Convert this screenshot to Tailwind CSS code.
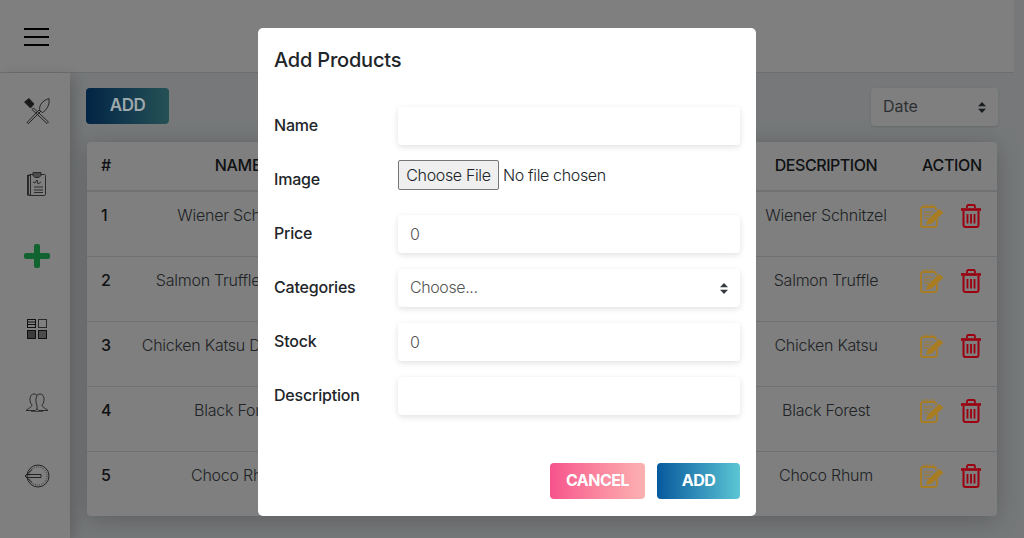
<!DOCTYPE html>
<html lang="en">
  <head>
    <meta charset="UTF-8" />
    <meta name="viewport" content="width=device-width, initial-scale=1.0" />
    <title>Products</title>
    <script src="https://cdn.jsdelivr.net/npm/@tailwindcss/browser@4"></script>
  </head>
  <body class="font-['Inter',sans-serif] text-[#212529] bg-[#ecf1f4]">
    <!-- shared row icons -->
    <svg class="absolute w-0 h-0">
      <symbol id="ic-edit" viewBox="0 0 24 24">
        <path d="M16 6V5a2 2 0 0 0-2-2H3a2 2 0 0 0-2 2v16a2 2 0 0 0 2 2h11a3 3 0 0 0 3-2v-6" fill="none" stroke="#a87c22" stroke-width="1.800" />
        <path d="M4 0v4M7 0v4M10 0v4M13 0v4M4 8h9M4 11h7M4 14h5" fill="none" stroke="#a87c22" stroke-width="1" />
        <path d="M6 21l1.500-5L19 5l4.500 3.500L12 19.500Z" fill="#a87c22" />
      </symbol>
      <symbol id="ic-trash" viewBox="0 0 20 24">
        <path d="M0 5.500h20" fill="none" stroke="#9c0010" stroke-width="2.600" />
        <path d="M6 4V2.500Q6 1 7.500 1h5Q14 1 14 2.500V4" fill="none" stroke="#9c0010" stroke-width="1.800" />
        <path d="M2.500 7v14q0 2 2 2h11q2 0 2-2V7" fill="none" stroke="#9c0010" stroke-width="2" />
        <path d="M6.500 10v9.500M10 10v9.500M13.500 10v9.500" fill="none" stroke="#9c0010" stroke-width="1.800" />
      </symbol>
    </svg>

    <div class="relative h-[538px] w-[1024px] overflow-hidden">
      <!-- Header -->
      <header class="flex items-center w-[1014px] h-[73px] bg-white border-b border-[#ddd] pl-6">
        <svg class="mt-[2px]" width="26" height="18" viewBox="0 0 26 18" fill="none" stroke="#000" stroke-width="1.800"><path d="M0 1h25M0 9h25M0 17h25" /></svg>
        <p class="flex-1 text-center text-[24px] pl-[35px] pt-[4px] text-[#555]">Products</p>
      </header>

      <div class="flex h-[465px]">
        <!-- Sidebar -->
        <aside class="w-[70px] shrink-0 bg-white shadow-[4px_4px_14px_rgba(0,0,0,0.2)] flex flex-col items-center pt-[25px] pl-[3px]">
          <svg class="w-[26px] h-[26px] shrink-0" viewBox="0 0 26 26" fill="none" stroke="#333" stroke-width="0.900">
            <path d="M3 24.500 15 12l1.500 1.500L4.500 25.500ZM24.500 24 9.500 10 8 11.500 23 25.500Z" />
            <path d="M0.500 4 5 0.500l5 5.500-3.500 4Z" fill="#333" />
            <path d="M16 13c-1.500-4 1-10 9-12.500 1 7-3 12-6.500 14Z" />
          </svg>
          <svg class="w-[20px] h-[24px] shrink-0 mt-[48px]" viewBox="0 0 20 24" fill="none" stroke="#444" stroke-width="0.900">
            <rect x="1.500" y="2.500" width="17" height="21" rx="1" />
            <rect x="0.500" y="3.500" width="3" height="19.500" />
            <path d="M6 .5h8v3l-2 2H8l-2-2Z" fill="#999" />
            <path d="M6 10l2 1 2-3 1 4 3-2M7 15h9M7 18h9M7 20.500h9" />
          </svg>
          <svg class="w-[26px] h-[24px] shrink-0 mt-[48px]" viewBox="0 0 26 24" fill="#22c75e"><rect x="0" y="9" width="26" height="6" rx="2" /><rect x="10" y="0" width="6" height="24" rx="2" /></svg>
          <svg class="w-[20px] h-[20px] shrink-0 mt-[51px]" viewBox="0 0 20 20" fill="none" stroke="#222" stroke-width="1">
            <rect x="0.500" y="0.500" width="8" height="8" />
            <path d="M1 3h7M1 5.500h7" />
            <rect x="11.500" y="0.500" width="8" height="8" stroke="#555" />
            <rect x="0.500" y="11.500" width="8" height="8" fill="#777" />
            <rect x="11.500" y="11.500" width="8" height="8" fill="#999" />
          </svg>
          <svg class="w-[24px] h-[19px] shrink-0 mt-[54px]" viewBox="0 0 24 19" fill="none" stroke="#444" stroke-width="0.900">
            <path d="M7 12C4 9 4 1 9 1c1.500 0 2.500 .5 3 1.500 .5-1 1.500-1.500 3-1.500 5 0 5 8 2 11 0 2 3 3 6 5.500H14c-1 0-2-1-2-2 0 1-1 2-2 2H1c3-2.500 6-3.500 6-5.500Z" />
            <path d="M12 2.500c-1.500 3-1.500 7 0 10v3" />
            <path d="M6 18.500h12" stroke="#777" />
          </svg>
          <svg class="w-[26px] h-[24px] shrink-0 mt-[52px]" viewBox="0 0 26 24" fill="none" stroke="#333" stroke-width="0.900">
            <circle cx="14" cy="12" r="11" />
            <circle cx="14" cy="12" r="9" stroke-dasharray="1 1" stroke="#666" />
            <path d="M8 5.500 1 12l7 6.500M2 10.500h15v3H2" />
          </svg>
        </aside>

        <!-- Main -->
        <main class="flex-1 pl-4 pr-[26px] pt-[15px] min-w-0">
          <div class="flex justify-between items-start h-[54px]">
            <button class="w-[83px] h-9 rounded-[4px] bg-gradient-to-r from-[#06498a] to-[#4aa3ab] text-[17px] font-semibold tracking-[-0.5px]"><span class="relative z-20 text-[#9ea7ac]">ADD</span></button>
            <div class="relative w-[127px] h-[38px]">
              <select class="appearance-none w-full h-full pb-[2px] bg-white rounded-[4px] px-[12px] text-[16px] text-[#5b6166] shadow-sm">
                <option>Date</option>
              </select>
              <svg class="absolute right-[12px] top-[14px]" width="8" height="11" viewBox="0 0 8 11" fill="#343a40"><path d="M4 0 8 4.300H0ZM4 11 0 6.700h8Z" /></svg>
            </div>
          </div>

          <div class="w-[910px] h-[374px] ml-[1px] bg-white rounded-[4px] shadow-[0_4px_24px_rgba(0,0,0,0.22)]">
            <table class="w-full table-fixed text-[16px]">
              <colgroup>
                <col class="w-[40px]" />
                <col class="w-[222px]" />
                <col class="w-[101px]" /><col class="w-[101px]" /><col class="w-[102px]" /><col class="w-[102px]" />
                <col class="w-[142px]" />
                <col class="w-[100px]" />
              </colgroup>
              <thead>
                <tr class="h-[49px] border-b-2 border-[#dee2e6]">
                  <th class="pl-[14px] pb-[2px] text-left font-medium">#</th>
                  <th class="pb-[2px] font-medium tracking-[-0.3px]">NAME</th>
                  <th class="pb-[2px] font-medium">IMAGE</th>
                  <th class="pb-[2px] font-medium">PRICE</th>
                  <th class="pb-[2px] font-medium">CATEGORY</th>
                  <th class="pb-[2px] font-medium">STOCK</th>
                  <th class="pb-[2px] font-medium tracking-[-0.45px]">DESCRIPTION</th>
                  <th class="pl-[25px] pb-[2px] text-left font-medium tracking-[-0.3px]">ACTION</th>
                </tr>
              </thead>
              <tbody class="text-center align-top text-[#42474c] font-[350] tracking-[-0.25px]">
                <tr class="h-[65px] border-b border-[#dee2e6]">
                  <td class="pl-[14px] pt-[11px] text-left font-medium text-[#212529]">1</td>
                  <td class="pt-[11px]">Wiener Schnitzel</td>
                  <td colspan="4"></td>
                  <td class="pt-[11px]">Wiener Schnitzel</td>
                  <td class="pl-[23px] pt-[12px]">
                    <div class="flex gap-[17px]">
                      <svg width="24" height="24" class="relative z-20"><use href="#ic-edit" /></svg>
                      <svg width="20" height="24" class="relative z-20"><use href="#ic-trash" /></svg>
                    </div>
                  </td>
                </tr>
                <tr class="h-[65px] border-b border-[#dee2e6]">
                  <td class="pl-[14px] pt-[11px] text-left font-medium text-[#212529]">2</td>
                  <td class="pt-[11px]">Salmon Truffle Teriyaki</td>
                  <td colspan="4"></td>
                  <td class="pt-[11px]">Salmon Truffle</td>
                  <td class="pl-[23px] pt-[12px]">
                    <div class="flex gap-[17px]">
                      <svg width="24" height="24" class="relative z-20"><use href="#ic-edit" /></svg>
                      <svg width="20" height="24" class="relative z-20"><use href="#ic-trash" /></svg>
                    </div>
                  </td>
                </tr>
                <tr class="h-[65px] border-b border-[#dee2e6]">
                  <td class="pl-[14px] pt-[11px] text-left font-medium text-[#212529]">3</td>
                  <td class="pt-[11px] whitespace-nowrap">Chicken Katsu Donburi Set</td>
                  <td colspan="4"></td>
                  <td class="pt-[11px]">Chicken Katsu</td>
                  <td class="pl-[23px] pt-[12px]">
                    <div class="flex gap-[17px]">
                      <svg width="24" height="24" class="relative z-20"><use href="#ic-edit" /></svg>
                      <svg width="20" height="24" class="relative z-20"><use href="#ic-trash" /></svg>
                    </div>
                  </td>
                </tr>
                <tr class="h-[65px] border-b border-[#dee2e6]">
                  <td class="pl-[14px] pt-[11px] text-left font-medium text-[#212529]">4</td>
                  <td class="pt-[11px]">Black Forest</td>
                  <td colspan="4"></td>
                  <td class="pt-[11px]">Black Forest</td>
                  <td class="pl-[23px] pt-[12px]">
                    <div class="flex gap-[17px]">
                      <svg width="24" height="24" class="relative z-20"><use href="#ic-edit" /></svg>
                      <svg width="20" height="24" class="relative z-20"><use href="#ic-trash" /></svg>
                    </div>
                  </td>
                </tr>
                <tr class="h-[65px]">
                  <td class="pl-[14px] pt-[11px] text-left font-medium text-[#212529]">5</td>
                  <td class="pt-[11px]">Choco Rhum</td>
                  <td colspan="4"></td>
                  <td class="pt-[11px]">Choco Rhum</td>
                  <td class="pl-[23px] pt-[12px]">
                    <div class="flex gap-[17px]">
                      <svg width="24" height="24" class="relative z-20"><use href="#ic-edit" /></svg>
                      <svg width="20" height="24" class="relative z-20"><use href="#ic-trash" /></svg>
                    </div>
                  </td>
                </tr>
              </tbody>
            </table>
          </div>
        </main>
      </div>

      <!-- Modal -->
      <div class="absolute inset-0 z-10 bg-black/50"></div>
      <div class="absolute z-30 left-[258px] top-[28px] w-[498px] h-[488px] bg-white rounded-[5px] px-4 flex flex-col">
        <h2 class="text-[20px] font-medium leading-[24px] mt-5 tracking-[-0.2px]">Add Products</h2>
        <form class="flex flex-col mt-[35px]">
          <div class="flex items-center h-[38px] mb-4">
            <label class="w-[124px] pb-[2px] font-medium tracking-[-0.2px]">Name</label>
            <input class="w-[342px] h-[38px] rounded-[4px] px-3 shadow-[0_2px_6px_rgba(0,0,0,0.12)]" type="text" />
          </div>
          <div class="flex items-center h-[38px] mb-4">
            <label class="w-[124px] pb-[2px] font-medium tracking-[-0.2px]">Image</label>
            <input class="w-[342px] mt-[-10px] file:mr-[4px] file:h-[30px] file:w-[101px] file:bg-[#efefef] file:border file:border-[#767676] file:rounded-[2px] tracking-[-0.35px] font-[350]" type="file" />
          </div>
          <div class="flex items-center h-[38px] mb-4">
            <label class="w-[124px] pb-[2px] font-medium tracking-[-0.2px]">Price</label>
            <input class="w-[342px] h-[38px] rounded-[4px] px-3 text-[#555] font-[350] shadow-[0_2px_6px_rgba(0,0,0,0.12)]" type="number" value="0" />
          </div>
          <div class="flex items-center h-[38px] mb-4">
            <label class="w-[124px] pb-[2px] font-medium tracking-[-0.2px]">Categories</label>
            <div class="relative w-[342px] h-[38px]">
              <select class="appearance-none w-full h-full pb-[2px] rounded-[4px] px-3 text-[#555] font-[350] tracking-[-0.4px] shadow-[0_2px_6px_rgba(0,0,0,0.12)]">
                <option>Choose...</option>
              </select>
              <svg class="absolute right-[12px] top-[14px]" width="8" height="11" viewBox="0 0 8 11" fill="#343a40"><path d="M4 0 8 4.300H0ZM4 11 0 6.700h8Z" /></svg>
            </div>
          </div>
          <div class="flex items-center h-[38px] mb-4">
            <label class="w-[124px] pb-[2px] font-medium tracking-[-0.2px]">Stock</label>
            <input class="w-[342px] h-[38px] rounded-[4px] px-3 text-[#555] font-[350] shadow-[0_2px_6px_rgba(0,0,0,0.12)]" type="number" value="0" />
          </div>
          <div class="flex items-center h-[38px]">
            <label class="w-[124px] pb-[2px] font-medium tracking-[-0.2px]">Description</label>
            <input class="w-[342px] h-[38px] rounded-[4px] px-3 shadow-[0_2px_6px_rgba(0,0,0,0.12)]" type="text" />
          </div>
          <div class="flex justify-end gap-3 mt-[48px]">
            <button type="button" class="w-[95px] h-9 pb-[2px] rounded-[4px] bg-gradient-to-r from-[#f6528c] to-[#fbb1b1] text-white font-bold tracking-[-0.5px]">CANCEL</button>
            <button type="button" class="w-[83px] h-9 pb-[2px] rounded-[4px] bg-gradient-to-r from-[#07599c] to-[#5bc6d4] text-white font-bold tracking-[-0.5px]">ADD</button>
          </div>
        </form>
      </div>
    </div>
  </body>
</html>
